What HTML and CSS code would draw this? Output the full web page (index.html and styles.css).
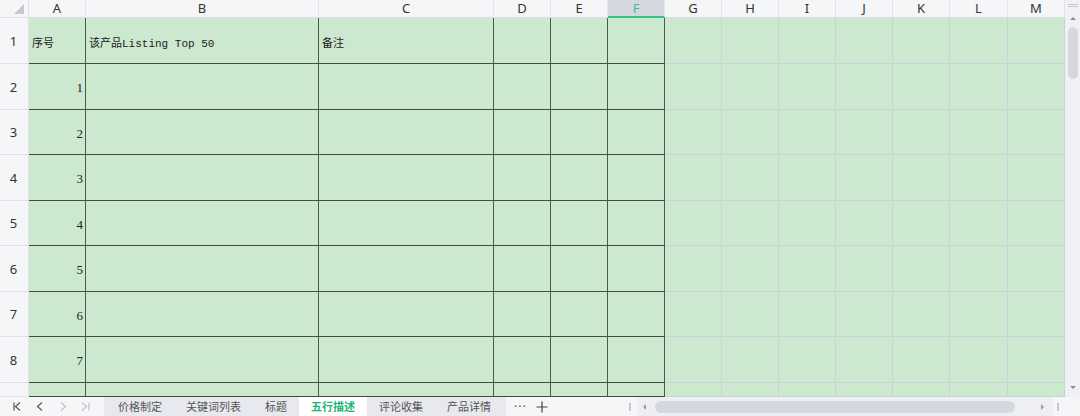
FILE: index.html
```html
<!DOCTYPE html>
<html lang="zh">
<head>
    <meta charset="UTF-8">
    <title>五行描述</title>
    <link rel="stylesheet" href="styles.css">
</head>
<body>
  <div class="main">
    <div class="sheet">
      <!-- column header -->
      <div class="corner"><span class="tri"></span></div>
      <div class="ch">A</div><div class="ch">B</div><div class="ch">C</div><div class="ch">D</div><div class="ch">E</div>
      <div class="ch sel">F</div>
      <div class="ch">G</div><div class="ch">H</div><div class="ch">I</div><div class="ch">J</div><div class="ch">K</div><div class="ch">L</div><div class="ch">M</div>

      <div class="rh">1</div>
      <div class="cell b txt">序号</div><div class="cell b txt">该产品Listing Top 50</div><div class="cell b txt">备注</div><div class="cell b"></div><div class="cell b"></div><div class="cell b"></div>
      <div class="cell"></div><div class="cell"></div><div class="cell"></div><div class="cell"></div><div class="cell"></div><div class="cell"></div><div class="cell"></div>

      <div class="rh">2</div>
      <div class="cell b num">1</div><div class="cell b"></div><div class="cell b"></div><div class="cell b"></div><div class="cell b"></div><div class="cell b"></div>
      <div class="cell"></div><div class="cell"></div><div class="cell"></div><div class="cell"></div><div class="cell"></div><div class="cell"></div><div class="cell"></div>

      <div class="rh">3</div>
      <div class="cell b num">2</div><div class="cell b"></div><div class="cell b"></div><div class="cell b"></div><div class="cell b"></div><div class="cell b"></div>
      <div class="cell"></div><div class="cell"></div><div class="cell"></div><div class="cell"></div><div class="cell"></div><div class="cell"></div><div class="cell"></div>

      <div class="rh">4</div>
      <div class="cell b num">3</div><div class="cell b"></div><div class="cell b"></div><div class="cell b"></div><div class="cell b"></div><div class="cell b"></div>
      <div class="cell"></div><div class="cell"></div><div class="cell"></div><div class="cell"></div><div class="cell"></div><div class="cell"></div><div class="cell"></div>

      <div class="rh">5</div>
      <div class="cell b num">4</div><div class="cell b"></div><div class="cell b"></div><div class="cell b"></div><div class="cell b"></div><div class="cell b"></div>
      <div class="cell"></div><div class="cell"></div><div class="cell"></div><div class="cell"></div><div class="cell"></div><div class="cell"></div><div class="cell"></div>

      <div class="rh">6</div>
      <div class="cell b num">5</div><div class="cell b"></div><div class="cell b"></div><div class="cell b"></div><div class="cell b"></div><div class="cell b"></div>
      <div class="cell"></div><div class="cell"></div><div class="cell"></div><div class="cell"></div><div class="cell"></div><div class="cell"></div><div class="cell"></div>

      <div class="rh">7</div>
      <div class="cell b num">6</div><div class="cell b"></div><div class="cell b"></div><div class="cell b"></div><div class="cell b"></div><div class="cell b"></div>
      <div class="cell"></div><div class="cell"></div><div class="cell"></div><div class="cell"></div><div class="cell"></div><div class="cell"></div><div class="cell"></div>

      <div class="rh">8</div>
      <div class="cell b num">7</div><div class="cell b"></div><div class="cell b"></div><div class="cell b"></div><div class="cell b"></div><div class="cell b"></div>
      <div class="cell"></div><div class="cell"></div><div class="cell"></div><div class="cell"></div><div class="cell"></div><div class="cell"></div><div class="cell"></div>

      <!-- row 9, cut off -->
      <div class="rh"></div>
      <div class="cell b"></div><div class="cell b"></div><div class="cell b"></div><div class="cell b"></div><div class="cell b"></div><div class="cell b"></div>
      <div class="cell"></div><div class="cell"></div><div class="cell"></div><div class="cell"></div><div class="cell"></div><div class="cell"></div><div class="cell"></div>
    </div>

    <div class="vscroll">
      <span class="grip"></span>
      <span class="arr up"></span>
      <span class="vthumb"></span>
      <span class="spacer"></span>
      <span class="arr down"></span>
    </div>
  </div>

  <div class="bar">
    <div class="nav">
      <svg width="104" height="19" viewBox="0 0 104 19">
        <g fill="none" stroke-width="1.2">
          <g stroke="#555">
            <path d="M14 5.5v8M20 5.5l-4.5 4 4.5 4"/>
            <path d="M42 5.5l-4.5 4 4.5 4"/>
          </g>
          <g stroke="#c0c2c8">
            <path d="M61 5.5l4.5 4-4.5 4"/>
            <path d="M82 5.5l4.5 4-4.5 4M89 5.5v8"/>
          </g>
        </g>
      </svg>
    </div>
    <div class="tabs">
      <span class="tab">价格制定</span>
      <span class="tab">关键词列表</span>
      <span class="tab">标题</span>
      <span class="tab active">五行描述</span>
      <span class="tab">评论收集</span>
      <span class="tab">产品详情</span>
    </div>
    <div class="extra">
      <span class="more">···</span>
      <svg class="plus" width="12" height="12" viewBox="0 0 12 12">
        <path d="M6 0.5v11M0.5 6h11" stroke="#444" stroke-width="1.2" fill="none"/>
      </svg>
    </div>
    <div class="hscroll">
      <span class="handle"></span>
      <div class="track">
        <span class="harr left"></span>
        <span class="hthumb"></span>
        <span class="harr right"></span>
      </div>
      <span class="handle"></span>
    </div>
  </div>
</body>
</html>
```

FILE: styles.css
```css
body {
    margin: 0;
    width: 1080px;
    height: 416px;
    overflow: hidden;
    background-color: #f5f6f8;
    font-family: "Noto Sans", "Noto Sans CJK SC", sans-serif;
    color: #333;
}

.main {
    display: flex;
    height: 397px;
}

/* grid */
.sheet {
    display: grid;
    grid-template-columns: 29px 57px 233px 175px 57px 57px 57px 57px 57px 57px 57px 57px 58px 57px;
    grid-template-rows: 18px 46px 46px 45px 46px 45px 46px 45px 46px 14px;
    width: 1065px;
    height: 397px;
    overflow: hidden;
    background-color: #cce8cf;
}

.corner {
    position: relative;
    background-color: #f5f6f8;
    border-right: 1px solid #dfe1e6;
    border-bottom: 1px solid #dfe1e6;
    box-sizing: border-box;
}

.tri {
    position: absolute;
    right: 4px;
    bottom: 3px;
    width: 0;
    height: 0;
    border-left: 10px solid transparent;
    border-bottom: 10px solid #c8cad0;
}

.ch {
    background-color: #f5f6f8;
    border-right: 1px solid #e2e4e9;
    border-bottom: 1px solid #dadde2;
    box-sizing: border-box;
    font-size: 13px;
    line-height: 17px;
    text-align: center;
    color: #333;
}

.ch.sel {
    background-color: #d5d8df;
    color: #3cc08d;
    border-bottom: 2px solid #36c08a;
    line-height: 16px;
}

.rh {
    background-color: #f5f6f8;
    border-right: 1px solid #dfe1e6;
    border-bottom: 1px solid #dfe1e6;
    box-sizing: border-box;
    font-size: 13px;
    display: flex;
    align-items: center;
    justify-content: center;
    padding-right: 1px;
}

.cell {
    border-right: 1px solid #c7d3d8;
    border-bottom: 1px solid #c7d3d8;
    box-sizing: border-box;
    font-size: 11px;
    color: #222;
}

/* bordered table area */
.cell.b {
    border-right-color: #4c5a4c;
    border-bottom-color: #3f4b3f;
}

.txt {
    font-family: "Liberation Mono", "Noto Sans CJK SC", monospace;
    display: flex;
    align-items: center;
    padding-left: 3px;
    padding-top: 3px;
}

.num {
    font-family: "Liberation Serif", serif;
    font-size: 13px;
    display: flex;
    align-items: center;
    justify-content: flex-end;
    padding-right: 2px;
    padding-top: 3px;
}

/* right scrollbar */
.vscroll {
    width: 15px;
    background-color: #f0f1f4;
    display: flex;
    flex-direction: column;
    align-items: center;
}

.grip {
    width: 10px;
    height: 3px;
    margin-top: 4px;
    border-top: 1px solid #c6c8ce;
    border-bottom: 1px solid #c6c8ce;
    box-sizing: border-box;
}

.arr {
    width: 0;
    height: 0;
    border-left: 3px solid transparent;
    border-right: 3px solid transparent;
}

.arr.up {
    margin-top: 10px;
    border-bottom: 3px solid #8a8d95;
}

.arr.down {
    margin-bottom: 8px;
    border-top: 3px solid #8a8d95;
}

.vthumb {
    width: 10px;
    height: 52px;
    margin-top: 7px;
    border-radius: 5px;
    background-color: #d6d8de;
}

.spacer {
    flex: 1;
}

/* bottom bar */
.bar {
    display: flex;
    height: 19px;
    font-size: 12px;
}

.nav {
    width: 104px;
}

.nav svg {
    display: block;
}

.tabs {
    display: flex;
    background-color: #e8e9ee;
    padding: 0 3px 0 2px;
}

.tab {
    padding: 0 12px;
    font-size: 11px;
    line-height: 19px;
    color: #555;
}

.tab.active {
    background-color: #fff;
    color: #22b374;
    font-weight: bold;
}

.extra {
    display: flex;
    align-items: center;
    width: 119px;
    padding-left: 8px;
    box-sizing: border-box;
}

.more {
    color: #555;
    font-size: 12px;
    letter-spacing: 1px;
}

.plus {
    margin-left: 9px;
}

.hscroll {
    flex: 1;
    display: flex;
    align-items: center;
}

.handle {
    width: 2px;
    height: 8px;
    margin: 0 6px 0 4px;
    background-color: #c4c6cc;
}

.track {
    width: 416px;
    height: 19px;
    background-color: #eeeff2;
    display: flex;
    align-items: center;
}

.harr {
    width: 0;
    height: 0;
    border-top: 3px solid transparent;
    border-bottom: 3px solid transparent;
}

.harr.left {
    margin-left: 6px;
    border-right: 3px solid #9a9da5;
}

.harr.right {
    margin-left: 26px;
    border-left: 3px solid #9a9da5;
}

.hthumb {
    width: 360px;
    height: 12px;
    margin-left: 9px;
    border-radius: 6px;
    background-color: #d6d8df;
}
```
